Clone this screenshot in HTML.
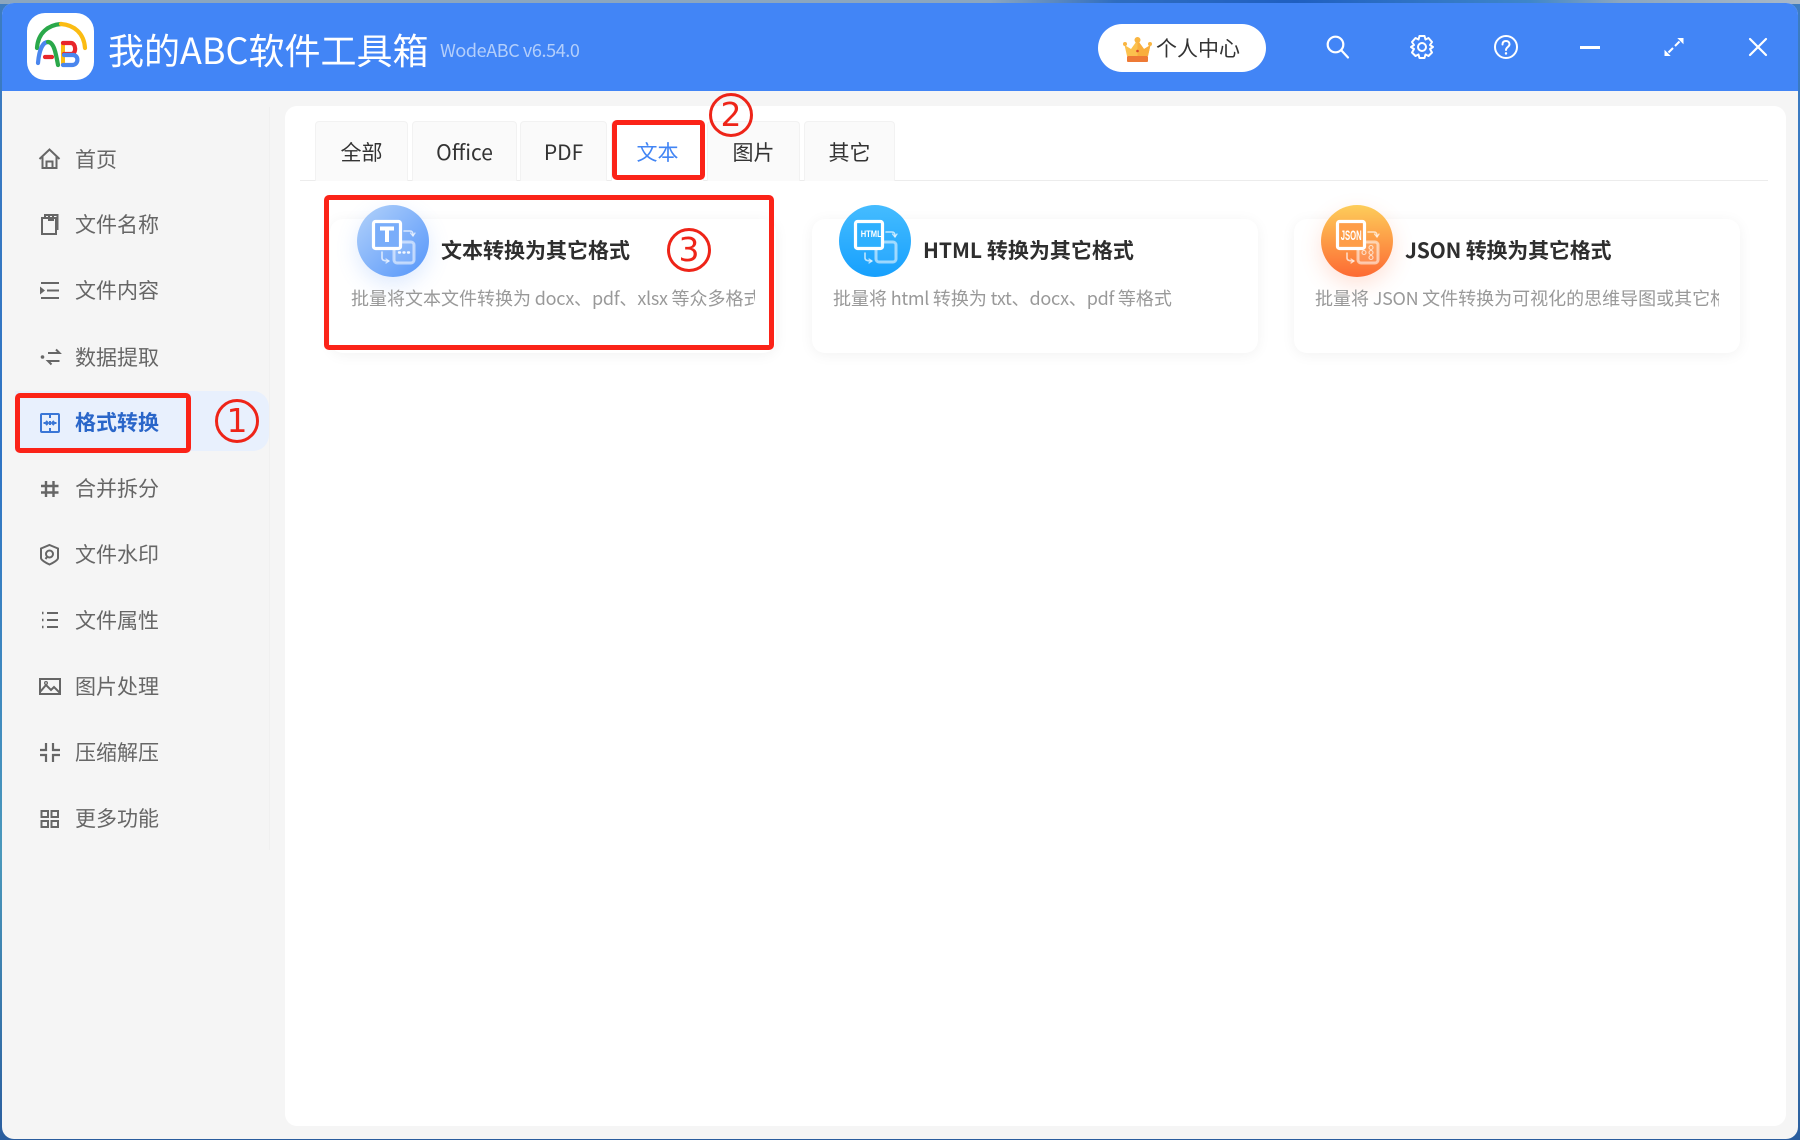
<!DOCTYPE html>
<html lang="zh-CN"><head><meta charset="utf-8"><title>我的ABC软件工具箱</title>
<style>
*{box-sizing:border-box;margin:0;padding:0}
html,body{width:1800px;height:1140px;overflow:hidden}
body{position:relative;font-family:"Liberation Sans","Noto Sans CJK SC",sans-serif;background:linear-gradient(180deg,#3d7cc0 0,#2f74c4 40%,#4a98bb 75%,#2a5d9e 100%)}
#top{position:absolute;left:0;top:0;width:1800px;height:4px;background:linear-gradient(90deg,#8ba6bf 0,#8ba6bf 55%,#2f6dbf 62%,#1f5fc0 72%,#3f86c9 85%,#8ba6bf 90%,#a8b8c8 100%)}
#win{position:absolute;left:2px;top:3px;width:1796px;height:1136px;background:#f5f5f5;border-radius:12px;overflow:hidden}
#hd{position:absolute;left:0;top:0;width:1796px;height:88px;background:#4285f6}
.a{position:absolute;white-space:nowrap}
.cjk{font-family:"Noto Sans CJK SC","Liberation Sans",sans-serif}
.nav{position:absolute;left:75px;width:100px;height:30px;line-height:30px;font-size:21px;color:#666;font-family:"Noto Sans CJK SC",sans-serif;white-space:nowrap}
.tab{position:absolute;top:121px;height:60px;background:#fafafa;border:1px solid #f2f2f2;border-bottom:none;border-radius:4px 4px 0 0;text-align:center;line-height:60px;font-size:21px;color:#333;font-family:"Noto Sans CJK SC",sans-serif}
.card{position:absolute;top:219px;width:446px;height:134px;background:#fff;border-radius:13px;box-shadow:0 2px 14px rgba(0,0,0,.055)}
.ci{position:absolute;top:205px;width:72px;height:72px;border-radius:50%}
.t{position:absolute;top:234px;height:32px;line-height:32px;font-size:21px;font-weight:700;color:#2e2e2e;font-family:"Noto Sans CJK SC",sans-serif;white-space:nowrap}
.d{position:absolute;top:284px;width:404px;height:28px;line-height:28px;font-size:18px;color:#999;overflow:hidden;white-space:nowrap;font-family:"Noto Sans CJK SC",sans-serif}
.d span{letter-spacing:-.28px}
.rb{position:absolute;border:5px solid #fb2318;border-radius:5px}
.num{position:absolute;width:44px;height:44px;border:3px solid #ee2418;border-radius:50%;color:#ee2418;text-align:center;font-size:33px;line-height:37px;font-family:"DejaVu Sans",sans-serif}
svg{position:absolute;overflow:visible}
</style></head><body>
<div id="top"></div>
<div id="win"></div>
<div id="hd" style="left:2px;top:3px;border-radius:12px 12px 0 0"></div>

<!-- logo -->
<div class="a" style="left:27px;top:13px;width:67px;height:67px;background:#fff;border-radius:18px"></div>
<svg style="left:0;top:0" width="110" height="90" fill="none" stroke-linecap="round">
<path d="M37 48C38 33 48 25 61 24" stroke="#2aa84a" stroke-width="4.2"/>
<path d="M61 24C74 25 84 33 85 48" stroke="#fbbc12" stroke-width="4.2"/>
<path d="M38 63C39 52 42 42 48 42" stroke="#4a86ee" stroke-width="4.2"/>
<path d="M48 42C54 42 56 54 58 65" stroke="#2aa84a" stroke-width="4.2"/>
<path d="M45 57H52" stroke="#e8262a" stroke-width="4.2"/>
<path d="M63 43V64" stroke="#fbbc12" stroke-width="4"/>
<path d="M63 43H71C76 43 77 54 71 54H64" stroke="#e8262a" stroke-width="4.2"/>
<path d="M64 55H73C79 55 79 65 72 65H63" stroke="#4a86ee" stroke-width="4.2"/>
</svg>
<div class="a cjk" style="left:108px;top:22px;height:54px;line-height:54px;font-size:36px;color:#fff">我的ABC软件工具箱</div>
<div class="a cjk" style="left:440px;top:36px;height:28px;line-height:28px;font-size:18px;letter-spacing:-.4px;color:#b4cffb">WodeABC v6.54.0</div>

<!-- user button -->
<div class="a" style="left:1098px;top:24px;width:168px;height:48px;background:#fff;border-radius:24px"></div>
<svg style="left:1123px;top:36px" width="29" height="27" viewBox="0 0 29 27">
<path d="M4 20L1.5 9 8 13 14.500 4 21 13 27.500 9 25 20Z" fill="#fcc14d"/>
<path d="M14.500 4L21 13 27.500 9 25 20H14.500Z" fill="#f9ae3d"/>
<circle cx="14.500" cy="4" r="3" fill="#f9b541"/><circle cx="2" cy="8" r="2" fill="#f9b541"/><circle cx="27" cy="8" r="2" fill="#f9b541"/>
<rect x="4" y="20" width="21" height="6" rx="1" fill="#ee7a35"/>
<circle cx="14.500" cy="15" r="1.300" fill="#d9482b"/>
</svg>
<div class="a cjk" style="left:1156px;top:33px;height:30px;line-height:30px;font-size:21px;color:#333">个人中心</div>

<!-- top icons -->
<svg style="left:1325px;top:34px" width="26" height="26" viewBox="0 0 26 26" fill="none" stroke="#fff" stroke-width="2.200" stroke-linecap="round"><circle cx="10.500" cy="10.500" r="7.800"/><path d="M16.500 16.500L23 23.500"/></svg>
<svg style="left:1409px;top:34px" width="26" height="26" viewBox="0 0 26 26" fill="none" stroke="#fff" stroke-width="2" stroke-linejoin="round"><path d="M10.500 2H15.500L16.500 5.500 19.500 4 23 8 21 11 24 13 21 15 23 18.500 19.500 22 16.500 20.500 15.500 24H10.500L9.500 20.500 6.500 22 3 18.500 5 15 2 13 5 11 3 8 6.500 4 9.500 5.500Z"/><circle cx="13" cy="13" r="4"/></svg>
<svg style="left:1493px;top:34px" width="26" height="26" viewBox="0 0 26 26" fill="none" stroke="#fff" stroke-width="2" stroke-linecap="round"><circle cx="13" cy="13" r="11"/><path d="M9.500 10.500C9.500 8 11 7 13 7S16.500 8.200 16.500 10.300C16.500 13 13 13 13 16"/><path d="M13 19.300V19.500" stroke-width="2.400"/></svg>
<div class="a" style="left:1580px;top:46px;width:20px;height:2.500px;background:#fff"></div>
<svg style="left:1663px;top:36px" width="22" height="22" viewBox="0 0 22 22" fill="#fff" stroke="#fff"><path d="M12 10L16.500 5.500" stroke-width="2"/><path d="M10 12L5.500 16.500" stroke-width="2"/><path d="M15.500 2.500H20V7Z" stroke-width="1"/><path d="M2 15V19.500H6.500Z" stroke-width="1"/></svg>
<svg style="left:1748px;top:37px" width="20" height="20" viewBox="0 0 20 20" fill="none" stroke="#fff" stroke-width="2.200" stroke-linecap="round"><path d="M2 2L18 18M18 2L2 18"/></svg>

<!-- sidebar -->
<div class="a" style="left:269px;top:107px;width:1px;height:743px;background:#f0f0f0"></div>
<div class="a" style="left:15px;top:391px;width:254px;height:60px;background:#e8f0fd;border-radius:0 16px 16px 0"></div>
<svg style="left:0;top:0" width="75" height="850" fill="none" stroke="#666" stroke-width="2">
<path d="M39.500 159L49.500 149.500 59.500 159M42.500 156.500V168H56.500V156.500M46.500 168V161.500H52.500V168"/>
<path d="M42 218V234H56V218ZM45 218V215H57.500V229H56M49 215V220H53V215"/>
<path d="M41 283H59M47 290.500H59M41 298H59"/><path d="M40 286.500L45 290.500 40 294.500Z" fill="#666" stroke="none"/>
<circle cx="42.500" cy="357" r="1.800" fill="#666" stroke="none"/><path d="M48 353H59.500L56 349.500M59.500 361H48L51.500 364.500"/>
<g stroke="#3a76d6"><rect x="41" y="414" width="18" height="18" rx="1"/><path d="M50 414V418M50 421V425M50 428V432M43.500 423H48M46 421L48 423 46 425M56.500 423H52M54 421L52 423 54 425"/></g>
<path d="M46 481V497M53.500 481V497M41 486H58.500M41 492.500H58.500" stroke-width="2.400"/>
<path d="M49.500 545L58 548.500V558C58 560 53 563 49.500 564.500 46 563 41 560 41 558V548.500Z"/><circle cx="49.500" cy="554" r="3.500"/><path d="M47 557L45.500 559"/>
<path d="M47 613H58M47 620H58M47 627H58"/><path d="M42 613H43.500M42 620H43.500M42 627H43.500" stroke-width="2.400"/>
<rect x="40" y="679" width="20" height="15"/><path d="M40 692L46 685 51 690 54 687 60 693"/><circle cx="46" cy="683" r="1.400" stroke-width="1.200"/>
<path d="M46 743V750H40M53 743V750H60M46 762V755H40M53 762V755H60" stroke-width="2.200"/>
<path d="M41.500 811H48V817H41.500ZM51.500 811H58V817H51.500ZM41.500 821H48V827H41.500ZM51.500 821H58V827H51.500Z"/>
</svg>
<div class="nav" style="top:144px">首页</div>
<div class="nav" style="top:209px">文件名称</div>
<div class="nav" style="top:275px">文件内容</div>
<div class="nav" style="top:342px">数据提取</div>
<div class="nav" style="top:407px;color:#2a66c9;font-weight:700">格式转换</div>
<div class="nav" style="top:473px">合并拆分</div>
<div class="nav" style="top:539px">文件水印</div>
<div class="nav" style="top:605px">文件属性</div>
<div class="nav" style="top:671px">图片处理</div>
<div class="nav" style="top:737px">压缩解压</div>
<div class="nav" style="top:803px">更多功能</div>

<!-- content -->
<div class="a" style="left:285px;top:106px;width:1501px;height:1020px;background:#fff;border-radius:12px"></div>
<div class="a" style="left:300px;top:180px;width:1468px;height:1px;background:#ececec"></div>
<div class="tab" style="left:315px;width:93px">全部</div>
<div class="tab" style="left:412px;width:105px">Office</div>
<div class="tab" style="left:520px;width:87px">PDF</div>
<div class="tab" style="left:611px;width:93px;background:#fff;color:#4285f4">文本</div>
<div class="tab" style="left:707px;width:93px">图片</div>
<div class="tab" style="left:804px;width:91px">其它</div>

<!-- cards -->
<div class="card" style="left:330px"></div>
<div class="card" style="left:812px"></div>
<div class="card" style="left:1294px"></div>

<div class="ci" style="left:357px;background:linear-gradient(135deg,#b3d2fa,#5495fa);box-shadow:0 8px 22px rgba(90,150,250,.2)"></div>
<div class="ci" style="left:839px;background:linear-gradient(180deg,#45bcff,#17a0fd)"></div>
<div class="ci" style="left:1321px;background:linear-gradient(180deg,#fdcd5a,#fd6a33);box-shadow:0 8px 22px rgba(253,110,60,.2)"></div>

<!-- card icon 1 -->
<svg style="left:357px;top:205px" width="72" height="72" viewBox="0 0 72 72" fill="none" stroke-linecap="round">
<rect x="37" y="37" width="20" height="21" rx="3" stroke="#fff" stroke-opacity=".55" stroke-width="3" fill="#fff" fill-opacity=".12"/>
<path d="M42 47.500H43M46.500 47.500H47.500M51 47.500H52" stroke="#fff" stroke-width="2.400" stroke-opacity=".9"/>
<path d="M47 26H53C55 26 56 27.500 56 30" stroke="#fff" stroke-opacity=".7" stroke-width="1.600"/><path d="M53.500 28L56 31 58 28" stroke="#fff" stroke-opacity=".7" stroke-width="1.300"/>
<path d="M25 47V53C25 55 26.500 56 31 56" stroke="#fff" stroke-opacity=".7" stroke-width="1.600"/><path d="M29 54L32 56 29 58" stroke="#fff" stroke-opacity=".7" stroke-width="1.300"/>
<rect x="16.500" y="16.500" width="27" height="27" rx="2" stroke="#fff" stroke-width="3.200" fill="#79adfa"/>
<path d="M23 23.500H37M30 23.500V37" stroke="#fff" stroke-width="4" stroke-linecap="butt"/>
</svg>
<!-- card icon 2 -->
<svg style="left:839px;top:205px" width="72" height="72" viewBox="0 0 72 72" fill="none" stroke-linecap="round">
<rect x="37" y="37" width="20" height="20" rx="3" stroke="#fff" stroke-opacity=".55" stroke-width="3" fill="#fff" fill-opacity=".05"/>
<path d="M47 27H53C55 27 56 28.500 56 31" stroke="#fff" stroke-opacity=".7" stroke-width="1.600"/><path d="M53.500 29L56 32 58 29" stroke="#fff" stroke-opacity=".7" stroke-width="1.300"/>
<path d="M26 48V53C26 55 27.500 56 32 56" stroke="#fff" stroke-opacity=".7" stroke-width="1.600"/><path d="M30 54L33 56 30 58" stroke="#fff" stroke-opacity=".7" stroke-width="1.300"/>
<rect x="16.500" y="16.500" width="27" height="27" rx="2" stroke="#fff" stroke-width="3.200" fill="#2fb0fe"/>
<text x="21.700" y="32" font-family="Liberation Sans" font-size="9" font-weight="700" fill="#fff" textLength="21" lengthAdjust="spacingAndGlyphs">HTML</text>
</svg>
<!-- card icon 3 -->
<svg style="left:1321px;top:205px" width="72" height="72" viewBox="0 0 72 72" fill="none" stroke-linecap="round">
<rect x="37" y="37" width="20" height="21" rx="3" stroke="#fff" stroke-opacity=".55" stroke-width="3" fill="#fff" fill-opacity=".12"/>
<g stroke="#fff" stroke-opacity=".7" stroke-width="1.100"><circle cx="43" cy="47.500" r="2"/><circle cx="50" cy="42.500" r="2"/><circle cx="50" cy="47.500" r="2"/><circle cx="50" cy="52.500" r="2"/></g>
<path d="M47 27H53C55 27 56 28.500 56 31" stroke="#fff" stroke-opacity=".7" stroke-width="1.600"/><path d="M53.500 29L56 32 58 29" stroke="#fff" stroke-opacity=".7" stroke-width="1.300"/>
<path d="M26 48V53C26 55 27.500 56 32 56" stroke="#fff" stroke-opacity=".7" stroke-width="1.600"/><path d="M30 54L33 56 30 58" stroke="#fff" stroke-opacity=".7" stroke-width="1.300"/>
<rect x="16.500" y="16.500" width="27" height="27" rx="2" stroke="#fff" stroke-width="3.200" fill="#fe9d48"/>
<text x="19.700" y="35" font-family="Liberation Sans" font-size="14" font-weight="700" fill="#fff" textLength="21" lengthAdjust="spacingAndGlyphs">JSON</text>
</svg>

<div class="t" style="left:441px">文本转换为其它格式</div>
<div class="t" style="left:923px">HTML 转换为其它格式</div>
<div class="t" style="left:1405px;letter-spacing:-.2px">JSON 转换为其它格式</div>
<div class="d" style="left:351px">批量将文本文件转换为<span> docx</span>、<span>pdf</span>、<span>xlsx </span>等众多格式</div>
<div class="d" style="left:833px">批量将<span> html </span>转换为<span> txt</span>、<span>docx</span>、<span>pdf </span>等格式</div>
<div class="d" style="left:1315px">批量将<span> JSON </span>文件转换为可视化的思维导图或其它格式</div>

<!-- annotations -->
<div class="rb" style="left:14.500px;top:393px;width:176px;height:60px"></div>
<div class="rb" style="left:612px;top:120px;width:93px;height:60px"></div>
<div class="rb" style="left:324px;top:195px;width:450px;height:155px"></div>
<div class="num" style="left:215px;top:399px">1</div>
<div class="num" style="left:709px;top:93px">2</div>
<div class="num" style="left:667px;top:228px">3</div>
</body></html>
